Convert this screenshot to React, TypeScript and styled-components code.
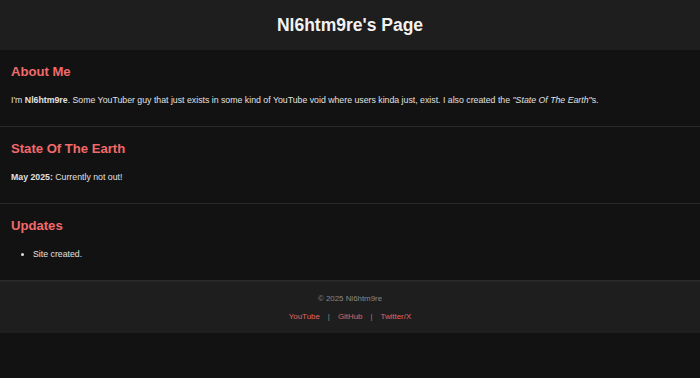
import React from 'react';
import styled, { createGlobalStyle } from 'styled-components';

const GlobalStyle = createGlobalStyle`
  html, body {
    margin: 0;
    padding: 0;
    background: #121212;
    color: #e0e0e0;
    font-family: "Liberation Sans", Arial, sans-serif;
  }
`;

const Header = styled.header`
  height: 50px;
  background: #1e1e1e;
  display: flex;
  align-items: center;
  justify-content: center;
`;

const Title = styled.h1`
  margin: 0;
  font-size: 17.5px;
  font-weight: bold;
  color: #f2f2f2;
`;

const Section = styled.section`
  padding: 14px 11px 20px;
  border-bottom: 1px solid #2a2a2a;
`;

const Heading = styled.h2`
  margin: 0 0 15px;
  font-size: 13.1px;
  line-height: 15px;
  color: #f26a6a;
`;

const Text = styled.p`
  margin: 0;
  font-size: 8.75px;
  line-height: 12px;
`;

const List = styled.ul`
  margin: 0;
  padding-left: 22px;
  font-size: 8.75px;
  line-height: 12px;
`;

const Footer = styled.footer`
  height: 52px;
  background: #1e1e1e;
  border-top: 1px solid #262626;
  box-sizing: border-box;
  display: flex;
  flex-direction: column;
  align-items: center;
  padding-top: 11px;
  gap: 6px;
  font-size: 7.9px;
  line-height: 12px;
`;

const Copy = styled.div`
  color: #888;
`;

const Links = styled.div`
  display: flex;
  align-items: center;
`;

const Link = styled.a`
  color: #e06464;
  text-decoration: none;
`;

const Sep = styled.span`
  color: #888;
  margin: 0 8px;
`;

export default function App() {
  return (
    <>
      <GlobalStyle />
      <Header>
        <Title>Nl6htm9re's Page</Title>
      </Header>
      <main>
        <Section>
          <Heading>About Me</Heading>
          <Text>
            I'm <b>Nl6htm9re</b>. Some YouTuber guy that just exists in some kind of YouTube void where users
            kinda just, exist. I also created the <i>"State Of The Earth"</i>s.
          </Text>
        </Section>
        <Section>
          <Heading>State Of The Earth</Heading>
          <Text>
            <b>May 2025:</b> Currently not out!
          </Text>
        </Section>
        <Section>
          <Heading>Updates</Heading>
          <List>
            <li>Site created.</li>
          </List>
        </Section>
      </main>
      <Footer>
        <Copy>© 2025 Nl6htm9re</Copy>
        <Links>
          <Link href="#">YouTube</Link>
          <Sep>|</Sep>
          <Link href="#">GitHub</Link>
          <Sep>|</Sep>
          <Link href="#">Twitter/X</Link>
        </Links>
      </Footer>
    </>
  );
}
